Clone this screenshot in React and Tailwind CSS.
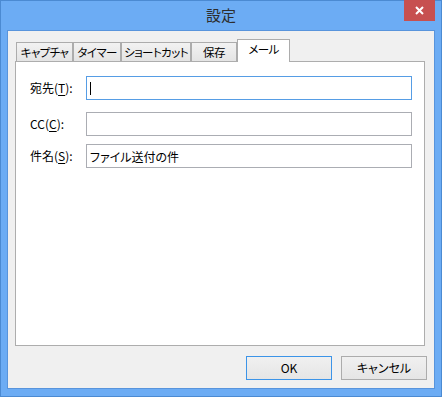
import { useState } from 'react';

const tabs = [
  { label: 'キャプチャ', w: 'w-[57px]' },
  { label: 'タイマー', w: 'w-[48px]' },
  { label: 'ショートカット', w: 'w-[70px]' },
  { label: '保存', w: 'w-[46px]' },
];

const Mnemonic = ({ pre, ch }) => (
  <span>
    {pre}(<span className="underline underline-offset-2">{ch}</span>):
  </span>
);

const App = () => {
  const [subject, setSubject] = useState('ファイル送付の件');

  return (
    <div className="w-[442px] h-[397px] relative flex flex-col bg-[#6cacf4] border border-[#4b8ad2] px-[6px] pb-[7px] text-[12px] text-black [font-family:'Noto_Sans_CJK_JP',sans-serif] [font-feature-settings:'palt']">

      {/* TITLE BAR */}
      <div className="h-[29px] flex items-center justify-center text-[15px] text-[#2d2d2d] pb-[1px]">
        設定
      </div>
      <div className="absolute top-[-1px] right-[6px] w-[31px] h-[21px] bg-[#c75050] flex items-center justify-center">
        <svg width="9" height="9" viewBox="0 0 9 9">
          <path d="M1 1 L8 8 M8 1 L1 8" stroke="#fff" strokeWidth="2" />
        </svg>
      </div>

      {/* CLIENT */}
      <div className="flex-1 flex flex-col bg-[#f0f0f0] border border-[#5894dc] px-[7px] pt-[8px] pb-[8px]">

        {/* TABS */}
        <div className="flex items-end h-[22px] pl-[1px] relative z-10">
          {tabs.map(t => (
            <div
              key={t.label}
              className={`${t.w} h-[19px] flex items-center justify-center border border-b-0 border-[#acacac] bg-linear-to-b from-[#f2f2f2] to-[#e4e4e4] leading-none whitespace-nowrap text-[11.5px] tracking-[-0.6px] pt-[1px]`}
            >
              {t.label}
            </div>
          ))}
          <div className="w-[53px] h-[23px] -mb-[1px] flex items-start justify-center pt-[4px] border border-b-0 border-[#acacac] bg-white leading-none whitespace-nowrap text-[11.5px] tracking-[-0.6px]">
            メール
          </div>
        </div>

        {/* PANEL */}
        <div className="h-[285px] mr-[2px] border border-[#adadad] bg-white pl-[14px] pr-[12px] pt-[14px] flex flex-col">
          <div className="flex items-center h-[24px]">
            <div className="w-[56px] shrink-0"><Mnemonic pre="宛先" ch="T" /></div>
            <div className="flex-1 h-[24px] border border-[#569de5] flex items-center pl-[3px]">
              <span className="w-px h-[13px] bg-black" />
            </div>
          </div>

          <div className="flex items-center h-[24px] mt-[12px]">
            <div className="w-[56px] shrink-0"><Mnemonic pre="CC" ch="C" /></div>
            <input className="flex-1 min-w-0 h-[24px] border border-[#abadb3] outline-none px-[3px]" />
          </div>

          <div className="flex items-center h-[24px] mt-[8px]">
            <div className="w-[56px] shrink-0"><Mnemonic pre="件名" ch="S" /></div>
            <input
              value={subject}
              onChange={e => setSubject(e.target.value)}
              className="flex-1 min-w-0 h-[24px] border border-[#abadb3] outline-none px-[3px]"
            />
          </div>
        </div>

        {/* BUTTONS */}
        <div className="flex justify-end gap-[9px] mt-[10px]">
          <button className="w-[86px] h-[24px] border border-[#3c94e8] bg-linear-to-b from-[#f0f0f0] to-[#e5e5e5] leading-none">
            OK
          </button>
          <button className="w-[86px] h-[24px] border border-[#acacac] bg-linear-to-b from-[#f0f0f0] to-[#e5e5e5] leading-none">
            キャンセル
          </button>
        </div>
      </div>
    </div>
  );
};

export default App;
